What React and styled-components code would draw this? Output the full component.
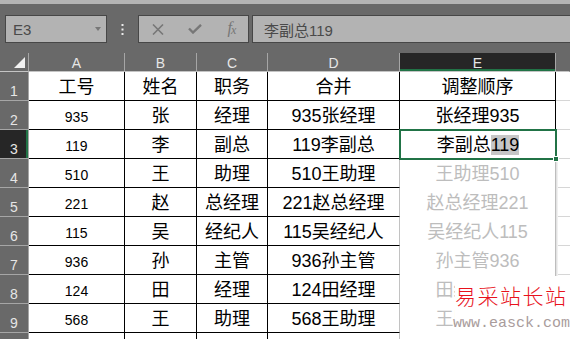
import React from "react";
import styled, { createGlobalStyle } from "styled-components";

const GlobalStyle = createGlobalStyle`
  body {
    margin: 0;
    background: #fff;
    overflow: hidden;
  }
`;

const GREEN = "#217346";

const Sheet = styled.div`
  position: relative;
  width: 570px;
  height: 339px;
  overflow: hidden;
  background: #696969;
  font-family: "Liberation Sans", "Noto Sans CJK SC", sans-serif;
`;

const TopStrip = styled.div`
  height: 4px;
  background: #b4b4b4;
`;

const FormulaBar = styled.div`
  display: flex;
  align-items: flex-start;
  height: 49px;
  box-sizing: border-box;
  padding: 11px 0 0 5px;
`;

const Box = styled.div`
  height: 28px;
  box-sizing: border-box;
  border: 1px solid #474747;
  background: #b3b3b3;
  display: flex;
  align-items: center;
`;

const NameBox = styled(Box)`
  width: 102px;
  padding: 0 5px 0 7px;
  justify-content: space-between;
  font-size: 15px;
  color: #4a4a4a;
`;

const DropArrow = styled.span`
  width: 0;
  height: 0;
  border-left: 3px solid transparent;
  border-right: 3px solid transparent;
  border-top: 4px solid #777;
`;

const Dots = styled.div`
  width: 31px;
  height: 28px;
  display: flex;
  align-items: center;
  justify-content: center;
`;

const FxBox = styled(Box)`
  width: 111px;
  margin-right: 3px;
  display: grid;
  grid-template-columns: repeat(3, 37px);
  justify-items: center;
`;

const FxLabel = styled.span`
  font-family: "Liberation Serif", serif;
  font-style: italic;
  font-size: 16px;
  line-height: 16px;
  color: #767676;
  letter-spacing: -1px;

  sub {
    font-size: 12px;
    vertical-align: -1px;
  }
`;

const FormulaInput = styled(Box)`
  flex: 1;
  border-right: none;
  padding-left: 11px;
  font-size: 15px;
  color: #4a4a4a;
`;

const Grid = styled.div`
  display: grid;
  grid-template-columns: 29px 96px 72px 71px 132px 156px 1fr;
  grid-template-rows: 19px;
  grid-auto-rows: 29px;
`;

const Corner = styled.div`
  box-sizing: border-box;
  border-right: 1px solid #a6a6a6;
  border-bottom: 1px solid #c4c4c4;
  display: flex;
  align-items: flex-end;
  justify-content: flex-end;
  padding: 0 3px 3px 0;
`;

const ColHead = styled.div`
  box-sizing: border-box;
  border-right: 1px solid ${({ $last }) => ($last ? "transparent" : "#a6a6a6")};
  border-bottom: 1px solid #c4c4c4;
  background: ${({ $active }) => ($active ? "#262626" : "transparent")};
  box-shadow: ${({ $active }) => ($active ? `inset 0 -2px 0 ${GREEN}` : "none")};
  color: #e6e6e6;
  font-size: 14px;
  line-height: 18px;
  padding-top: 1px;
  text-align: center;
`;

const RowHead = styled.div`
  box-sizing: border-box;
  border-right: 1px solid #a6a6a6;
  border-bottom: 1px solid #a6a6a6;
  background: ${({ $active }) => ($active ? "#262626" : "#696969")};
  box-shadow: ${({ $active }) => ($active ? `inset -2px 0 0 ${GREEN}` : "none")};
  color: #e6e6e6;
  font-size: 14px;
  line-height: 16px;
  padding-top: 11px;
  text-align: center;
`;

const Cell = styled.div`
  position: relative;
  box-sizing: border-box;
  background: #fff;
  border-bottom: 1px solid #000;
  border-right: 1px solid ${({ $edge }) => ($edge ? "#c2c2c2" : "#000")};
  font-size: 18px;
  line-height: 20px;
  padding-top: 5px;
  text-align: center;
  white-space: nowrap;
  color: #000;
`;

const ActiveCell = styled(Cell)`
  z-index: 2;
  border: none;
  outline: 2px solid ${GREEN};
  outline-offset: -1px;

  &::after {
    content: "";
    position: absolute;
    right: -3px;
    bottom: -3px;
    width: 4px;
    height: 4px;
    background: ${GREEN};
    border: 1px solid #fff;
  }
`;

const GhostCell = styled(Cell)`
  z-index: 1;
  border-bottom: none;
  border-right: 1px solid #bdbdbd;
  box-shadow: 1px 0 0 #e2e2e2, 2px 0 0 #f0f0f0;
  color: #bdbdbd;
`;

const BlankCell = styled.div`
  background: #fff;
  border-bottom: 1px solid #d6d6d6;
`;

const Small = styled.span`
  font-size: 14px;
`;

const Picked = styled.span`
  background: #c6c6c6;
`;

const Watermark = styled.div`
  position: absolute;
  left: 455px;
  top: 276px;
  right: 0;
  bottom: 0;
  background: #fff;
  padding-top: 7px;
  z-index: 5;
`;

const MarkTitle = styled.div`
  font-family: "Noto Sans CJK SC", sans-serif;
  font-weight: 300;
  font-size: 21px;
  line-height: 24px;
  letter-spacing: 1.5px;
  color: #e8121c;
`;

const MarkUrl = styled.div`
  margin-top: 9px;
  margin-left: -2px;
  font-family: "Liberation Mono", monospace;
  font-size: 15px;
  line-height: 16px;
  white-space: nowrap;
  color: #a99c9c;
`;

const rows = [
  ["工号", "姓名", "职务", "合并", "调整顺序"],
  ["935", "张", "经理", "935张经理", "张经理935"],
  ["119", "李", "副总", "119李副总", "李副总119"],
  ["510", "王", "助理", "510王助理", "王助理510"],
  ["221", "赵", "总经理", "221赵总经理", "赵总经理221"],
  ["115", "吴", "经纪人", "115吴经纪人", "吴经纪人115"],
  ["936", "孙", "主管", "936孙主管", "孙主管936"],
  ["124", "田", "经理", "124田经理", "田经理124"],
  ["568", "王", "助理", "568王助理", "王助理568"],
  ["", "", "", "", ""],
];

const columns = ["A", "B", "C", "D", "E", ""];

export default function App() {
  return (
    <Sheet>
      <GlobalStyle />
      <TopStrip />
      <FormulaBar>
        <NameBox>
          E3
          <DropArrow />
        </NameBox>
        <Dots>
          <svg width="3" height="11" viewBox="0 0 3 11">
            <rect x="0.5" y="0" width="2" height="2" fill="#ececec" />
            <rect x="0.5" y="4.5" width="2" height="2" fill="#ececec" />
            <rect x="0.5" y="9" width="2" height="2" fill="#ececec" />
          </svg>
        </Dots>
        <FxBox>
          <svg width="12" height="11" viewBox="0 0 12 11">
            <path d="M1 0.5 L11 10.5 M11 0.5 L1 10.5" stroke="#777" strokeWidth="1.6" />
          </svg>
          <svg width="14" height="10" viewBox="0 0 14 10">
            <path d="M1 4.5 L5 8.5 L13 0.8" stroke="#777" strokeWidth="2.4" fill="none" />
          </svg>
          <FxLabel>
            f<sub>x</sub>
          </FxLabel>
        </FxBox>
        <FormulaInput>李副总119</FormulaInput>
      </FormulaBar>

      <Grid>
        <Corner>
          <svg width="11" height="11" viewBox="0 0 11 11">
            <polygon points="11,0 11,11 0,11" fill="#f2f2f2" />
          </svg>
        </Corner>
        {columns.map((c, i) => (
          <ColHead key={i} $active={c === "E"} $last={c === ""}>
            {c}
          </ColHead>
        ))}

        {rows.map((row, r) => {
          const n = r + 1;
          const ghost = n >= 4;
          return (
            <React.Fragment key={n}>
              <RowHead $active={n === 3}>{n < 10 ? n : ""}</RowHead>
              <Cell>{n === 1 ? row[0] : <Small>{row[0]}</Small>}</Cell>
              <Cell>{row[1]}</Cell>
              <Cell>{row[2]}</Cell>
              <Cell $edge={ghost}>{row[3]}</Cell>
              {n === 3 ? (
                <ActiveCell>
                  李副总<Picked>119</Picked>
                </ActiveCell>
              ) : ghost ? (
                <GhostCell>{row[4]}</GhostCell>
              ) : (
                <Cell>{row[4]}</Cell>
              )}
              <BlankCell />
            </React.Fragment>
          );
        })}
      </Grid>

      <Watermark>
        <MarkTitle>易采站长站</MarkTitle>
        <MarkUrl>www.easck.com</MarkUrl>
      </Watermark>
    </Sheet>
  );
}
